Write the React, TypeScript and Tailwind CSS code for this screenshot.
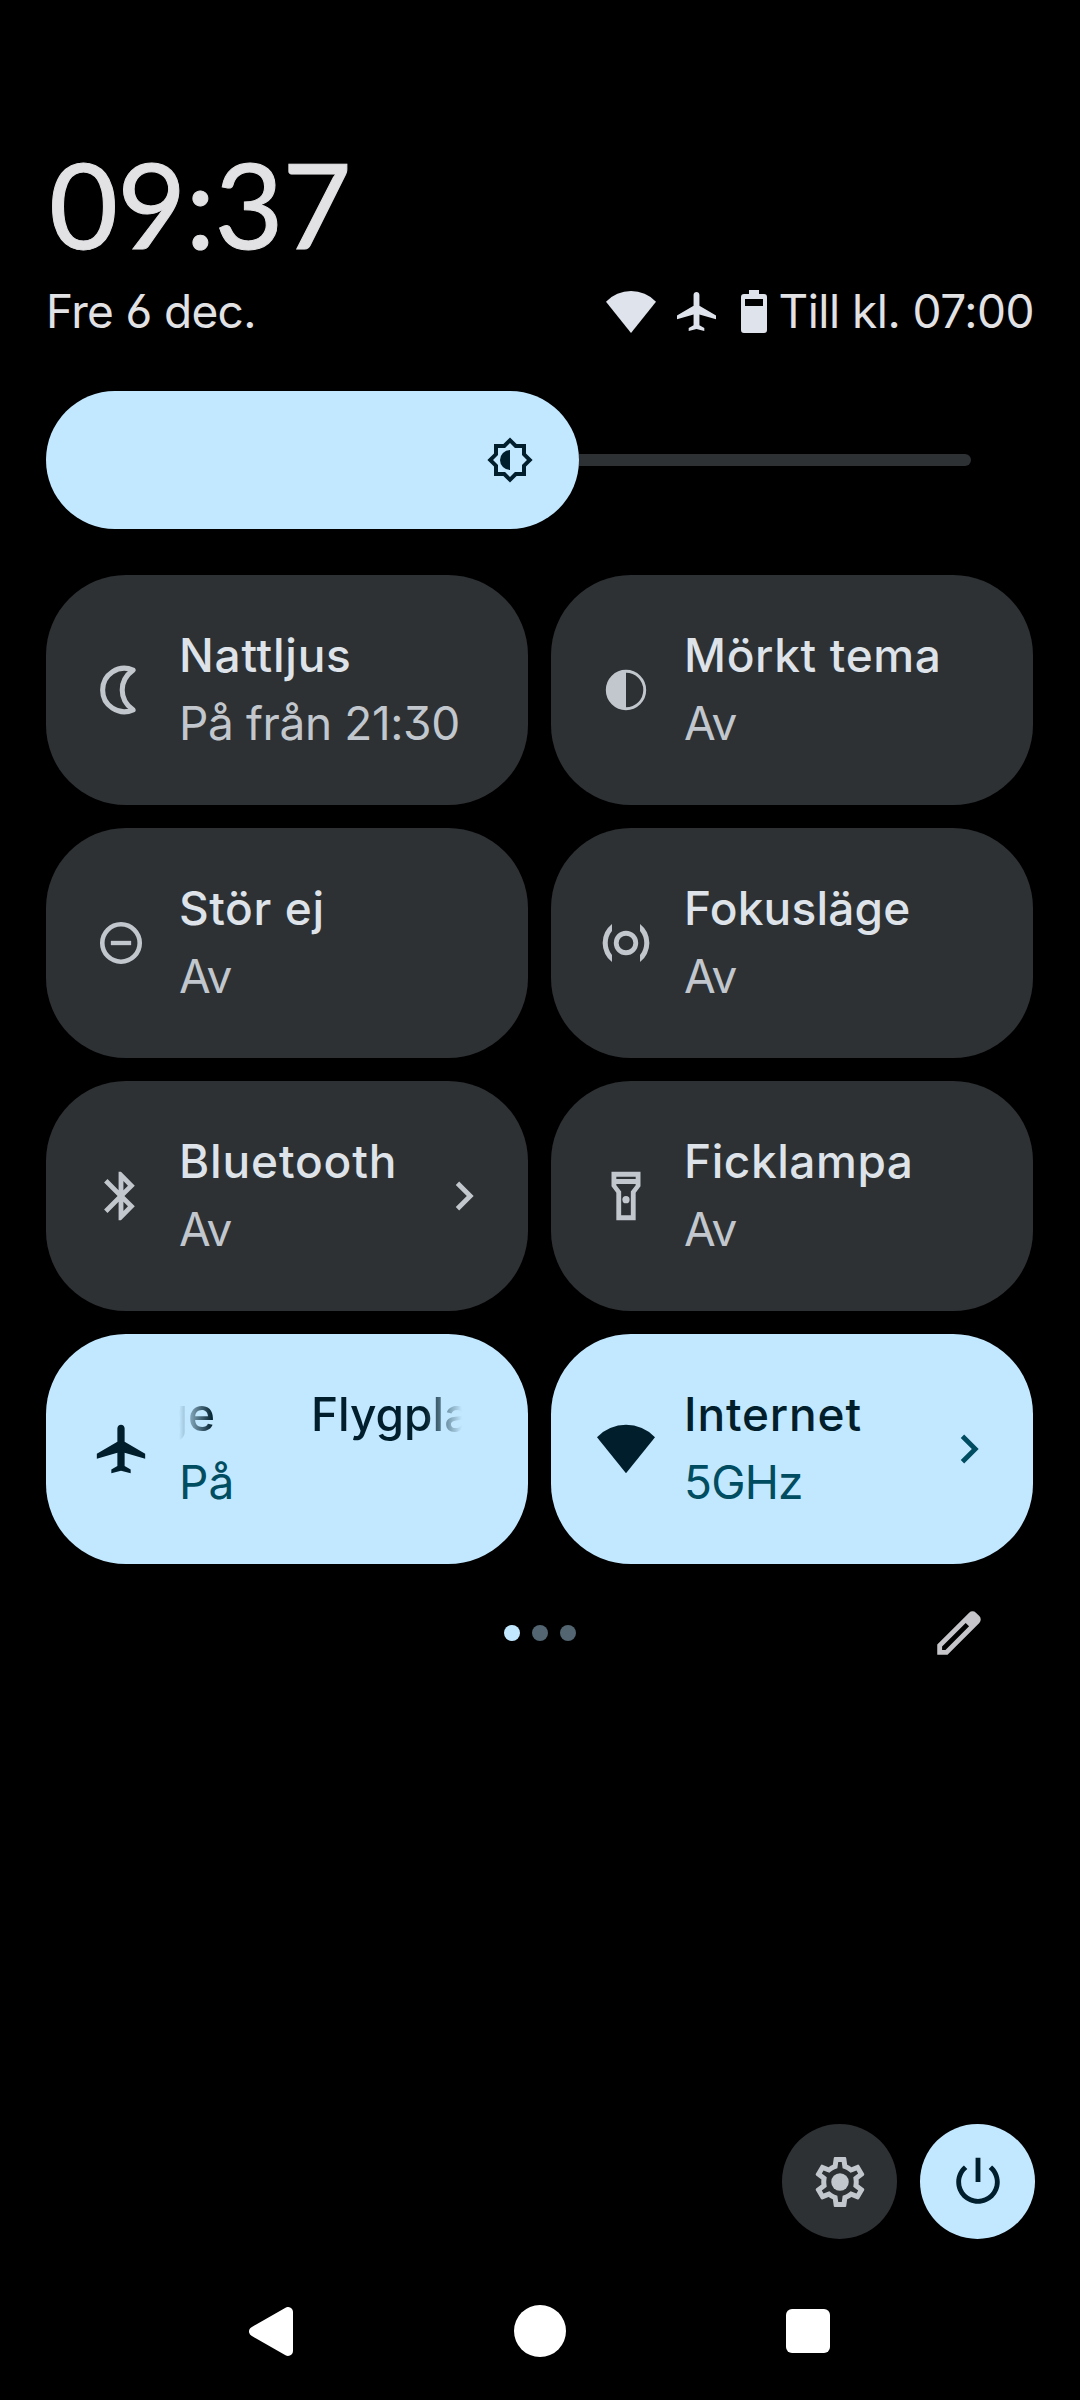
import type { ReactNode } from "react";
import { clsx } from "clsx";

function Icon({ children, className }: { children: ReactNode; className?: string }) {
  return (
    <svg viewBox="0 0 24 24" fill="currentColor" fillRule="evenodd" className={clsx("shrink-0", className)} aria-hidden="true">
      {children}
    </svg>
  );
}

const AIRPLANE_PATH =
  "M22 16v-2l-8.5-5V3.5c0-.83-.67-1.5-1.5-1.5s-1.5.67-1.5 1.5V9L2 14v2l8.5-2.5V19L8 20.5V22l4-1 4 1v-1.5L13.5 19v-5.5L22 16z";
const WIFI_PATH = "M12 22L0 7.1A16.7 16.7 0 0 1 24 7.1z";

const icons = {
  night: <path d="M17 3.75A9 9 0 1 0 17 20.25C11 16 11 8 17 3.75z" fill="none" stroke="currentColor" strokeWidth="2.1" strokeLinejoin="round" />,
  dark: (
    <>
      <circle cx="12" cy="12" r="7.75" fill="none" stroke="currentColor" strokeWidth="1.2" />
      <path d="M12 4a8 8 0 0 0 0 16z" />
    </>
  ),
  dnd: (
    <>
      <circle cx="12" cy="12" r="7.75" fill="none" stroke="currentColor" strokeWidth="1.9" />
      <path d="M7.8 11.1h8.4v1.8H7.8z" />
    </>
  ),
  focus: (
    <>
      <circle cx="12" cy="12" r="4.05" fill="none" stroke="currentColor" strokeWidth="2" />
      <path d="M6.2 4.1V7A8 8 0 0 0 6.2 17v2.9A10 10 0 0 1 6.2 4.1zM17.8 4.1V7A8 8 0 0 1 17.8 17v2.9A10 10 0 0 0 17.8 4.1z" />
    </>
  ),
  bluetooth: (
    <path d="M17.71 7.71L12 2h-1v7.59L6.41 5 5 6.41 10.59 12 5 17.59 6.41 19 11 14.41V22h1l5.71-5.71-4.3-4.29 4.3-4.29zM13 5.83l1.88 1.88L13 9.59V5.83zm1.88 10.46L13 18.17v-3.76l1.88 1.88z" />
  ),
  flashlight: (
    <>
      <path d="M18 2H6v6l2 2.7V22h8V10.7L18 8zM16 4v1H8V4zM14 10.1V20h-4v-9.9L8 7.5V7h8v.5z" />
      <circle cx="12" cy="13.5" r="1.5" />
    </>
  ),
  airplane: <path d={AIRPLANE_PATH} />,
  wifi: <path d={WIFI_PATH} />,
};

type Tile = {
  icon: keyof typeof icons;
  title: string;
  subtitle: string;
  titleClass: string;
  subtitleClass: string;
  active?: boolean;
  chevron?: boolean;
  marquee?: boolean;
};

const tiles: Tile[] = [
  { icon: "night", title: "Nattljus", subtitle: "På från 21:30", titleClass: "tracking-[0.75px]", subtitleClass: "tracking-[-0.4px]" },
  { icon: "dark", title: "Mörkt tema", subtitle: "Av", titleClass: "tracking-[0.65px]", subtitleClass: "tracking-[-1px]" },
  { icon: "dnd", title: "Stör ej", subtitle: "Av", titleClass: "tracking-[0.6px]", subtitleClass: "tracking-[-1px]" },
  { icon: "focus", title: "Fokusläge", subtitle: "Av", titleClass: "tracking-[0.2px]", subtitleClass: "tracking-[-1px]" },
  { icon: "bluetooth", title: "Bluetooth", subtitle: "Av", titleClass: "tracking-[0.85px]", subtitleClass: "tracking-[-1px]", chevron: true },
  { icon: "flashlight", title: "Ficklampa", subtitle: "Av", titleClass: "tracking-[0.55px]", subtitleClass: "tracking-[-1px]" },
  { icon: "airplane", title: "Flygplansläge", subtitle: "På", titleClass: "tracking-normal", subtitleClass: "tracking-normal", active: true, marquee: true },
  { icon: "wifi", title: "Internet", subtitle: "5GHz", titleClass: "tracking-[0.85px]", subtitleClass: "tracking-[-0.8px]", active: true, chevron: true },
];

function QuickTile({ tile }: { tile: Tile }) {
  return (
    <div
      className={clsx(
        "flex h-[230px] items-center rounded-[80px] pr-[35px] pl-[46px]",
        tile.active ? "bg-[#c2e8ff] text-[#001e2b]" : "bg-[#2d3134] text-[#c1c7cd]",
      )}
    >
      <Icon className="size-[58px]">{icons[tile.icon]}</Icon>
      <div className="ml-[29px] min-w-0 flex-1 pb-[3px] text-[46px] leading-[68px] whitespace-nowrap">
        {tile.marquee ? (
          <div className="flex w-[283px] gap-[96px] overflow-hidden font-medium [mask-image:linear-gradient(to_right,transparent,black_34px,black_246px,transparent)]">
            <span className="flex w-[36px] shrink-0 justify-end">{tile.title}</span>
            <span className={tile.titleClass}>{tile.title}</span>
          </div>
        ) : (
          <div className={clsx("font-medium", tile.titleClass, !tile.active && "text-[#dee3e9]")}>{tile.title}</div>
        )}
        <div className={clsx(tile.subtitleClass, tile.active && "text-[#004d61]")}>{tile.subtitle}</div>
      </div>
      {tile.chevron && (
        <Icon className={clsx("size-[58px]", tile.active && "text-[#004d61]")}>
          <path d="M10 6L8.59 7.41 13.17 12l-4.58 4.59L10 18l6-6z" />
        </Icon>
      )}
    </div>
  );
}

export default function App() {
  return (
    <div className="flex h-[2400px] w-[1080px] flex-col bg-black pt-[143px] font-['Inter',sans-serif] text-[#e2e2e5] [font-feature-settings:'ss01']">
      <header className="pr-[46px] pl-[46px]">
        <div className="pl-[3px] font-['Lato',sans-serif] text-[119px] leading-[120px] tracking-[-0.8px] [-webkit-text-stroke:1px_#e2e2e5]">
          09:37
        </div>
        <div className="mt-3.5 flex items-center justify-between text-[46px] leading-[68px] whitespace-nowrap">
          <span className="tracking-[-0.65px]">Fre 6 dec.</span>
          <div className="flex items-center text-[#dfe3eb]">
            <svg viewBox="0 2 24 20" preserveAspectRatio="none" fill="currentColor" className="mt-px h-[42px] w-[50px]" aria-hidden="true">
              <path d={WIFI_PATH} />
            </svg>
            <svg viewBox="2 2 20 20" fill="currentColor" className="mt-px ml-[21px] size-[39px]" aria-hidden="true">
              <path d={AIRPLANE_PATH} />
            </svg>
            <svg viewBox="0 0 26 43" fill="currentColor" fillRule="evenodd" className="ml-[25px] h-[43px] w-[26px]" aria-hidden="true">
              <path d="M8 0h10v4h5a3 3 0 0 1 3 3v33a3 3 0 0 1-3 3H3a3 3 0 0 1-3-3V7a3 3 0 0 1 3-3h5zM4 9v7h18V9z" />
            </svg>
            <span className="ml-[11px] tracking-[-0.5px] text-[#e2e2e5]">Till kl. 07:00</span>
          </div>
        </div>
      </header>

      {/* Brightness */}
      <div className="mt-[46px] flex items-center pl-[46px]">
        <div className="flex h-[138px] w-[533px] items-center justify-end rounded-full bg-[#c2e8ff] pr-[45px] text-[#001e2b]">
          <Icon className="size-[48px]">
            <path d="M20 15.31L23.31 12 20 8.69V4h-4.69L12 .69 8.69 4H4v4.69L.69 12 4 15.31V20h4.69L12 23.31 15.31 20H20v-4.69zM18 14.48V18h-3.52L12 20.48 9.52 18H6v-3.52L3.52 12 6 9.52V6h3.52L12 3.52 14.48 6H18v3.52L20.48 12z" />
            <path d="M12 7a5 5 0 0 0 0 10z" />
          </Icon>
        </div>
        <div className="h-3 w-[392px] rounded-r-full bg-[#2d3134]" />
      </div>

      <main className="mt-[46px] grid grid-cols-[482px_482px] gap-[23px] pl-[46px]">
        {tiles.map((tile) => (
          <QuickTile key={tile.title} tile={tile} />
        ))}
      </main>

      {/* Page indicator and edit button */}
      <div className="mt-[40px] grid h-[58px] grid-cols-3 items-center px-[92px]">
        <div className="col-start-2 flex justify-center gap-3">
          <span className="size-4 rounded-full bg-[#c2e8ff]" />
          <span className="size-4 rounded-full bg-[#526570]" />
          <span className="size-4 rounded-full bg-[#526570]" />
        </div>
        <Icon className="size-[58px] justify-self-end text-[#c6c6ca]">
          <path d="M3 21v-4.25L16.2 3.57a2 2 0 0 1 2.8 0l1.4 1.4a2 2 0 0 1 0 2.85L7.25 21zM5 19h1.4l9.77-9.77-1.4-1.4L5 17.6z" />
        </Icon>
      </div>

      <div className="mt-auto flex justify-end gap-[23px] pr-[45px]">
        <div className="flex size-[115px] items-center justify-center rounded-full bg-[#2d3134] text-[#c1c7cd]">
          <Icon className="size-[60px]">
            <path d="M19.43 12.98c.04-.32.07-.64.07-.98 0-.34-.03-.66-.07-.98l2.11-1.65c.19-.15.24-.42.12-.64l-2-3.46c-.09-.16-.26-.25-.44-.25-.06 0-.12.01-.17.03l-2.49 1c-.52-.4-1.08-.73-1.69-.98l-.38-2.65C14.46 2.18 14.25 2 14 2h-4c-.25 0-.46.18-.49.42l-.38 2.65c-.61.25-1.17.59-1.69.98l-2.49-1c-.06-.02-.12-.03-.18-.03-.17 0-.34.09-.43.25l-2 3.46c-.13.22-.07.49.12.64l2.11 1.65c-.04.32-.07.65-.07.98 0 .33.03.66.07.98l-2.11 1.65c-.19.15-.24.42-.12.64l2 3.46c.09.16.26.25.44.25.06 0 .12-.01.17-.03l2.49-1c.52.4 1.08.73 1.69.98l.38 2.65c.03.24.24.42.49.42h4c.25 0 .46-.18.49-.42l.38-2.65c.61-.25 1.17-.59 1.69-.98l2.49 1c.06.02.12.03.18.03.17 0 .34-.09.43-.25l2-3.46c.12-.22.07-.49-.12-.64l-2.11-1.65zm-1.98-1.71c.04.31.05.52.05.73 0 .21-.02.43-.05.73l-.14 1.13.89.7 1.08.84-.7 1.21-1.27-.51-1.04-.42-.9.68c-.43.32-.84.56-1.25.73l-1.06.43-.16 1.13-.2 1.35h-1.4l-.19-1.35-.16-1.13-1.06-.43c-.43-.18-.83-.41-1.23-.71l-.91-.7-1.06.43-1.27.51-.7-1.21 1.08-.84.89-.7-.14-1.13c-.03-.31-.05-.54-.05-.74s.02-.43.05-.73l.14-1.13-.89-.7-1.08-.84.7-1.21 1.27.51 1.04.42.9-.68c.43-.32.84-.56 1.25-.73l1.06-.43.16-1.13.2-1.35h1.39l.19 1.35.16 1.13 1.06.43c.43.18.83.41 1.23.71l.91.7 1.06-.43 1.27-.51.7 1.21-1.07.85-.89.7.14 1.13z" />
            <circle cx="12" cy="12" r="3.5" />
          </Icon>
        </div>
        <div className="flex size-[115px] items-center justify-center rounded-full bg-[#c2e8ff] text-[#001e2b]">
          <Icon className="size-[58px]">
            <path d="M13 2h-2v10h2zM17.83 5.17l-1.42 1.42C17.99 7.86 19 9.81 19 12c0 3.87-3.13 7-7 7s-7-3.13-7-7c0-2.19 1.01-4.14 2.58-5.42L6.17 5.17C4.23 6.82 3 9.26 3 12c0 4.97 4.03 9 9 9s9-4.03 9-9c0-2.74-1.23-5.18-3.17-6.83z" />
          </Icon>
        </div>
      </div>

      {/* Navigation bar */}
      <nav className="mt-[65px] mb-[42px] flex h-[54px] items-center pl-[249px] text-white">
        <svg viewBox="0 0 44 49" fill="currentColor" className="h-[49px] w-[44px]" aria-hidden="true">
          <path d="M5 24.5L39 5v39z" stroke="currentColor" strokeWidth="10" strokeLinejoin="round" />
        </svg>
        <span className="ml-[221px] size-[52px] rounded-full bg-white" />
        <span className="ml-[220px] size-11 rounded-[6px] bg-white" />
      </nav>
    </div>
  );
}
